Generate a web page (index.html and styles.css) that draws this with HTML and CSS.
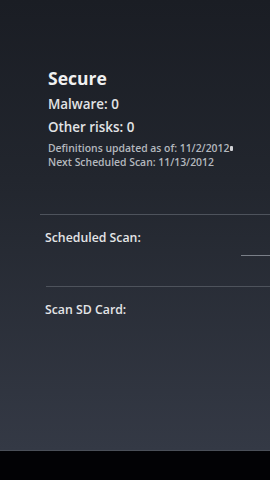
FILE: index.html
```
<!DOCTYPE html>
<html>
<head>
<meta charset="utf-8">
<link rel="stylesheet" href="styles.css">
</head>
<body>
<div class="screen">
  <main class="content">
    <section class="status">
      <div class="title">Secure</div>
      <div class="count">Malware: 0</div>
      <div class="count">Other risks: 0</div>
      <div class="meta first">Definitions updated as of: 11/2/2012<span class="dot"></span></div>
      <div class="meta">Next Scheduled Scan: 11/13/2012</div>
    </section>
    <div class="divider d1"></div>
    <section class="row">
      <div class="label">Scheduled Scan:</div>
      <div class="track"></div>
    </section>
    <div class="divider d2"></div>
    <section class="row">
      <div class="label">Scan SD Card:</div>
    </section>
  </main>
  <footer class="navbar"></footer>
</div>
</body>
</html>
```
FILE: styles.css
```
html, body {
  margin: 0;
  padding: 0;
  background: #020205;
}
body {
  font-family: "Open Sans", "Noto Sans", "DejaVu Sans", sans-serif;
  width: 270px;
  height: 480px;
  overflow: hidden;
}
.screen {
  display: flex;
  flex-direction: column;
  height: 480px;
}
.content {
  height: 450px;
  background: linear-gradient(180deg, #1a1d24 0%, #22262e 40%, #343945 100%);
  display: flex;
  flex-direction: column;
}
.status {
  padding: 67px 0 0 48px;
  display: flex;
  flex-direction: column;
}
.title {
  font-size: 17.5px;
  line-height: 22px;
  font-weight: 700;
  color: #f0f0f0;
  margin-bottom: 4px;
}
.count {
  font-size: 13.4px;
  line-height: 23px;
  font-weight: 600;
  color: #e2e3e5;
}
.meta {
  font-size: 10.4px;
  line-height: 14px;
  font-weight: 600;
  color: #b4b8be;
}
.meta.first {
  margin-top: 2px;
}
.dot {
  display: inline-block;
  width: 3px;
  height: 5px;
  background: #d0d2d6;
  border-radius: 1px;
  margin-left: 1px;
  vertical-align: 1px;
}
.divider {
  height: 1px;
  background: #4e535c;
}
.d1 {
  margin: 45px 0 0 40px;
}
.d2 {
  margin: 30px 0 0 46px;
}
.row {
  padding: 15px 0 0 45px;
  display: flex;
  flex-direction: column;
}
.label {
  font-size: 12.3px;
  line-height: 16px;
  font-weight: 600;
  color: #e4e5e7;
}
.track {
  align-self: flex-end;
  width: 29px;
  height: 1px;
  margin-top: 9px;
  background: #7a7f88;
}
.navbar {
  height: 29px;
  border-top: 1px solid #4a4f58;
  background: #020205;
}
```
